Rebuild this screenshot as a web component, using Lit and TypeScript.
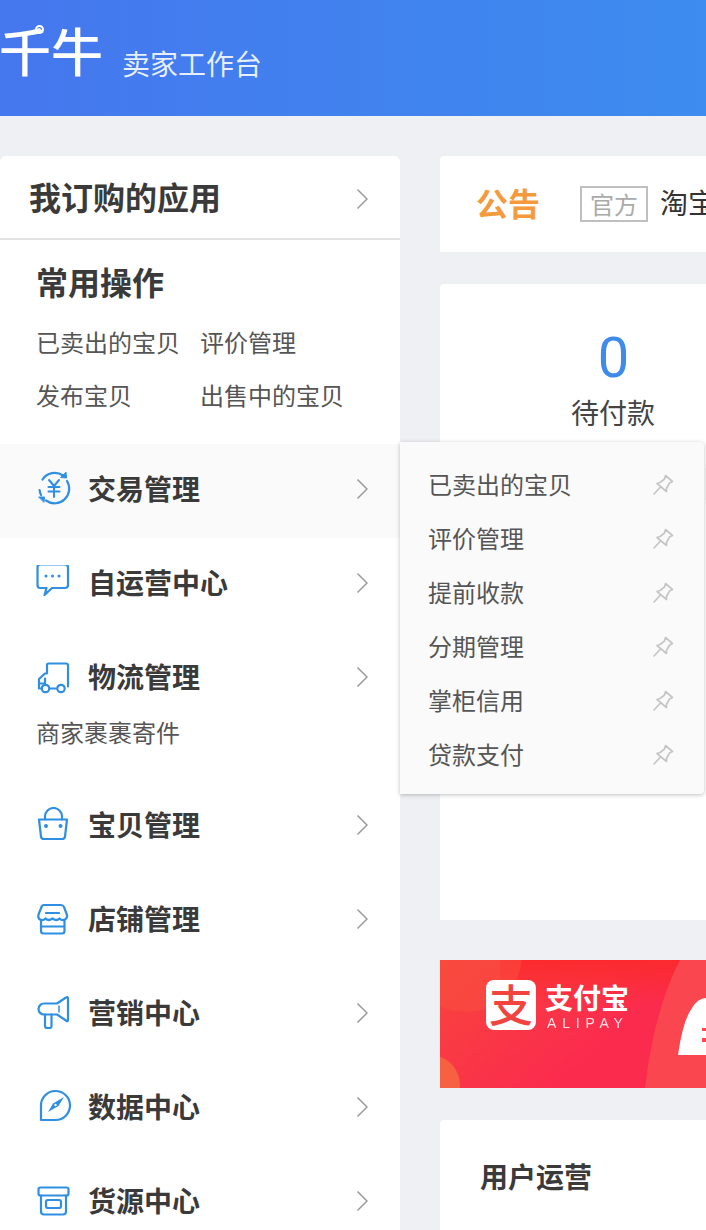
import { LitElement, html, css, svg } from "lit";
import { customElement } from "lit/decorators.js";

const chevron = html`<svg class="chev" viewBox="0 0 12 22" width="12" height="22"><path d="M1.5 1.5 L11 11 L1.5 20.5" fill="none" stroke="#9a9a9a" stroke-width="1.5"/></svg>`;
const pin = html`<svg class="pin" viewBox="0 0 22 22" width="22" height="22"><path d="M13.5 1.5 L20.5 7.5 L17.5 9 L14.5 14.5 L14.5 17.5 L5 9.5 L8 8.5 L12.5 5 Z M8.5 13 L2 20" fill="none" stroke="#c6c6c6" stroke-width="1.7" stroke-linejoin="round" stroke-linecap="round"/></svg>`;

const ic = (body: unknown, dy = 0) => html`<svg class="icon" viewBox="0 0 36 36" width="36" height="36" fill="none" stroke="#2f8fe2" stroke-width="2.2" stroke-linecap="round" stroke-linejoin="round"><g transform="translate(0 ${dy})">${body}</g></svg>`;

const icons: Record<string, unknown> = {
  trade: ic(svg`<path d="M6.5 9.5 A14.6 14.6 0 0 1 27 5.5"/><path d="M31 11 A14.6 14.6 0 0 1 10 30.5"/><path d="M5 25 A14.6 14.6 0 0 1 3.6 20"/><path d="M30 2.5 L30.5 8 L25 7.5 Z" fill="#2f8fe2" stroke-width="1"/><path d="M3 27 L8.5 27 L8 32 Z" fill="#2f8fe2" stroke-width="1"/><path d="M13 10 L18 16 L23 10 M12.5 17 H23.5 M12.5 21.5 H23.5 M18 16 V27" stroke-width="2"/>`, -1),
  chat: ic(svg`<path d="M4 1.5 H29 Q32 1.5 32 4.5 V22 Q32 25 29 25 H16 L8.5 32 L10.5 25 H4 Q1.5 25 1.5 22 V4.5 Q1.5 1.5 4 1.5 Z"/><circle cx="10" cy="13" r="1.5" fill="#2f8fe2" stroke="none"/><circle cx="16.5" cy="13" r="1.5" fill="#2f8fe2" stroke="none"/><circle cx="23" cy="13" r="1.5" fill="#2f8fe2" stroke="none"/>`, -2),
  truck: ic(svg`<path d="M11 13 V4.5 Q11 3 12.5 3 H30 Q32 3 32 5 V26 M3 28 V18.5 L9 13 H11 M3 28 H5 M14 28 H21 M9 18 V23 H4"/><circle cx="9.5" cy="28" r="3.7"/><circle cx="25" cy="28" r="3.7"/>`, 1.5),
  bag: ic(svg`<path d="M9 12 V9 A8.5 8.5 0 0 1 26 9 V12"/><path d="M3 12 H31 L29 29 Q28.7 31.5 26 31.5 H8 Q5.3 31.5 5 29 Z"/><circle cx="10" cy="18.5" r="2" fill="#2f8fe2" stroke="none"/><circle cx="24.5" cy="18.5" r="2" fill="#2f8fe2" stroke="none"/>`, 0.5),
  store: ic(svg`<path d="M8 3 H25 Q27 3 28 5 L31 13 Q31.5 16 29 17.5 Q26 19 23.5 16.5 Q20.5 19.5 16.5 16.5 Q12.5 19.5 9.5 16.5 Q7 19 4 17.5 Q1.5 16 2.5 12.5 L5.5 5 Q6 3 8 3 Z"/><path d="M10 11 H23"/><path d="M5 18 V29 Q5 31.5 7.5 31.5 H26 Q28.5 31.5 28.5 29 V18"/><path d="M5 24.5 H28"/>`, 1),
  mega: ic(svg`<path d="M11 8.5 H21 L30 2.5 Q32 1.5 32 3.5 V25 Q32 27 30 25.5 L21 19.5 H8 A5.5 5.5 0 0 1 8 8.5 Z"/><path d="M9 19.5 V31 Q9 33 11 33 H13.5 Q15.5 33 15.5 31 V19.5"/><path d="M23 11 V17" stroke-width="1.5"/>`),
  compass: ic(svg`<path d="M5 34 V20 A14.5 14.5 0 1 1 19.5 34 Z"/><path d="M28 11 L17 17.5 L12 26 L22.5 20 Z" fill="#2f8fe2" stroke="none"/><circle cx="19.5" cy="19" r="1.2" fill="#fff" stroke="none"/>`, -3),
  box: ic(svg`<rect x="2.5" y="3" width="30" height="8" rx="2"/><path d="M5 11 V27 Q5 30 8 30 H27 Q30 30 30 27 V11"/><rect x="10" y="15.5" width="15" height="8" rx="2"/>`, 1.5),
};

const menu: { icon: string; label: string; active?: boolean; sub?: string }[] = [
  { icon: "trade", label: "交易管理", active: true },
  { icon: "chat", label: "自运营中心" },
  { icon: "truck", label: "物流管理", sub: "商家裹裹寄件" },
  { icon: "bag", label: "宝贝管理" },
  { icon: "store", label: "店铺管理" },
  { icon: "mega", label: "营销中心" },
  { icon: "compass", label: "数据中心" },
  { icon: "box", label: "货源中心" },
];

const popItems = ["已卖出的宝贝", "评价管理", "提前收款", "分期管理", "掌柜信用", "贷款支付"];

@customElement("app-root")
export class AppRoot extends LitElement {
  static styles = css`
    :host {
      display: block;
      position: relative;
      width: 706px;
      height: 1230px;
      overflow: hidden;
      background: #eef0f3;
      font-family: "Noto Sans CJK SC", "Liberation Sans", sans-serif;
      color: #333;
    }
    .top {
      height: 116px;
      display: flex;
      align-items: center;
      background: linear-gradient(90deg, #4577ee 0%, #3d8cef 100%);
      color: #fff;
    }
    .logo {
      position: relative;
      font-size: 52px;
      line-height: 52px;
      font-weight: 500;
      width: 123px;
      margin: -17px 0 0 -1px;
      white-space: nowrap;
    }
    .logo::after {
      content: "";
      position: absolute;
      left: 36px;
      top: 1px;
      width: 5px;
      height: 5px;
      border: 2px solid #fff;
      border-radius: 50%;
    }
    .sub {
      font-size: 28px;
      line-height: 40px;
      margin-top: 10px;
      color: rgba(255, 255, 255, 0.88);
    }
    .main {
      display: grid;
      grid-template-columns: 400px 266px;
      column-gap: 40px;
      padding-top: 40px;
    }
    .side {
      background: #fff;
      border-radius: 6px 6px 0 0;
    }
    .sub-head {
      height: 82px;
      display: flex;
      align-items: center;
      justify-content: space-between;
      padding: 0 32px 0 29px;
      border-bottom: 2px solid #e2e2e2;
      font-size: 32px;
      font-weight: 700;
      color: #3a3a3a;
    }
    .sub-head span {
      margin-bottom: 2px;
    }
    .sub-head .chev {
      margin-top: 4px;
    }
    .common {
      height: 204px;
      padding: 18px 0 0 36px;
      box-sizing: border-box;
    }
    .common h2 {
      margin: 0 0 11px;
      font-size: 32px;
      line-height: 46px;
      font-weight: 700;
      color: #3a3a3a;
    }
    .links {
      display: grid;
      grid-template-columns: 164px auto;
      grid-auto-rows: 53px;
      font-size: 24px;
      color: #555;
      align-items: center;
    }
    .item {
      display: flex;
      align-items: center;
      box-sizing: border-box;
      height: 94px;
      padding: 0 32px 4px 36px;
      font-size: 28px;
      font-weight: 700;
      color: #3a3a3a;
    }
    .item.active {
      background: #fafafa;
    }
    .item .icon {
      margin-right: 16px;
      flex: none;
    }
    .item .label {
      flex: 1;
      margin-bottom: 2px;
    }
    .sublink {
      font-size: 24px;
      line-height: 34px;
      padding: 0 0 31px 36px;
      margin-top: -11px;
      color: #555;
    }
    .content {
      display: flex;
      flex-direction: column;
      min-width: 0;
    }
    .notice {
      height: 96px;
      background: #fff;
      display: flex;
      align-items: center;
      padding-left: 36px;
      white-space: nowrap;
      overflow: hidden;
      border-radius: 4px 0 0 0;
    }
    .notice b {
      font-size: 32px;
      font-weight: 700;
      color: #f59a3c;
      margin: 0 40px 4px 0;
      flex: none;
    }
    .tag {
      box-sizing: border-box;
      flex: none;
      width: 68px;
      height: 36px;
      border: 2px solid #bfbfbf;
      font-size: 24px;
      line-height: 31px;
      text-align: center;
      color: #aaa;
      margin-right: 12px;
    }
    .notice span.msg {
      font-size: 28px;
      color: #333;
      margin-bottom: 4px;
    }
    .stats {
      position: relative;
      margin-top: 32px;
      height: 636px;
      background: #fff;
      border-radius: 4px 0 0 0;
      overflow: hidden;
    }
    .stat {
      width: 346px;
      padding-top: 36px;
      text-align: center;
    }
    .num {
      font-family: "Roboto", "Liberation Sans", sans-serif;
      font-size: 56px;
      line-height: 76px;
      color: #3f8bec;
      padding-left: 1px;
    }
    .cap {
      font-size: 28px;
      line-height: 40px;
      margin-top: -4px;
      color: #444;
    }
    .banner {
      position: relative;
      margin-top: 40px;
      height: 128px;
      overflow: hidden;
      display: flex;
      background: #fb2d47;
    }
    .art {
      position: absolute;
      inset: 0;
      filter: blur(0.6px);
    }
    .brand {
      position: relative;
      display: flex;
      gap: 9px;
      padding: 20px 0 0 46px;
      color: #fff;
    }
    .mark {
      width: 50px;
      height: 50px;
      border-radius: 8px;
      background: #fff;
      color: #f2443f;
      font-size: 44px;
      line-height: 46px;
      text-align: center;
      font-weight: 500;
    }
    .bname {
      font-size: 28px;
      line-height: 30px;
      font-weight: 700;
      margin-top: 2px;
    }
    .bsub {
      font-family: "Liberation Sans", sans-serif;
      font-size: 14px;
      line-height: 14px;
      letter-spacing: 5.8px;
      margin: 4px 0 0 2px;
      opacity: 0.85;
    }
    .ops {
      margin-top: 32px;
      height: 200px;
      background: #fff;
      padding: 34px 0 0 40px;
      font-size: 28px;
      line-height: 44px;
      font-weight: 700;
      color: #3a3a3a;
      border-radius: 4px 0 0 0;
    }
    .popup {
      position: absolute;
      left: 400px;
      top: 442px;
      width: 304px;
      height: 352px;
      box-sizing: border-box;
      padding: 16px 30px 12px 28px;
      background: #fafafa;
      border-radius: 0 4px 4px 0;
      box-shadow: 0 1px 4px rgba(0, 0, 0, 0.25);
    }
    .pop-row {
      display: flex;
      align-items: center;
      justify-content: space-between;
      height: 54px;
      font-size: 24px;
      color: #555;
    }
    .pop-row span {
      margin-bottom: 4px;
    }
    .sliver {
      position: absolute;
      left: 704px;
      top: 468px;
      width: 2px;
      height: 32px;
      background: #e6e6e6;
    }
  `;

  render() {
    return html`
      <div class="top">
        <div class="logo">千牛</div>
        <div class="sub">卖家工作台</div>
      </div>
      <div class="main">
        <aside class="side">
          <div class="sub-head"><span>我订购的应用</span>${chevron}</div>
          <div class="common">
            <h2>常用操作</h2>
            <div class="links">
              <span>已卖出的宝贝</span><span>评价管理</span>
              <span>发布宝贝</span><span>出售中的宝贝</span>
            </div>
          </div>
          ${menu.map(
            (m) => html`
              <div class="item ${m.active ? "active" : ""}">
                ${icons[m.icon]}
                <span class="label">${m.label}</span>
                ${chevron}
              </div>
              ${m.sub ? html`<div class="sublink">${m.sub}</div>` : ""}
            `
          )}
        </aside>
        <section class="content">
          <div class="notice">
            <b>公告</b><span class="tag">官方</span><span class="msg">淘宝</span>
          </div>
          <div class="stats">
            <div class="stat">
              <div class="num">0</div>
              <div class="cap">待付款</div>
            </div>
          </div>
          <div class="banner">
            <svg class="art" viewBox="0 0 266 128" preserveAspectRatio="none">
              <defs>
                <linearGradient id="bg" x1="0" y1="0" x2="1" y2="0.55">
                  <stop offset="0" stop-color="#f8453c" />
                  <stop offset="0.75" stop-color="#fb2b4e" />
                </linearGradient>
                <linearGradient id="topg" x1="0" y1="0" x2="0" y2="1">
                  <stop offset="0" stop-color="#fb2a2e" />
                  <stop offset="1" stop-color="#fb2a2e" stop-opacity="0" />
                </linearGradient>
              </defs>
              <rect width="266" height="128" fill="url(#bg)" />
              <rect x="60" width="206" height="45" fill="url(#topg)" />
              <circle cx="25" cy="-5" r="57" fill="#f9503f" opacity="0.5" />
              <circle cx="-10" cy="125" r="30" fill="#f76040" />
              <path d="M240 0 H266 V128 H205 Q214 50 240 0 Z" fill="#f9464f" />
              <path d="M238 95 Q243 60 252 48 Q258 38 266 38 V95 Z" fill="#fff" />
              <rect x="262" y="68" width="4" height="3" fill="#f9464f" />
              <rect x="262" y="78" width="4" height="4" fill="#f9464f" />
            </svg>
            <div class="brand">
              <div class="mark">支</div>
              <div>
                <div class="bname">支付宝</div>
                <div class="bsub">ALIPAY</div>
              </div>
            </div>
          </div>
          <div class="ops">用户运营</div>
        </section>
      </div>
      <div class="popup">
        ${popItems.map((p) => html`<div class="pop-row"><span>${p}</span>${pin}</div>`)}
      </div>
      <div class="sliver"></div>
    `;
  }
}
